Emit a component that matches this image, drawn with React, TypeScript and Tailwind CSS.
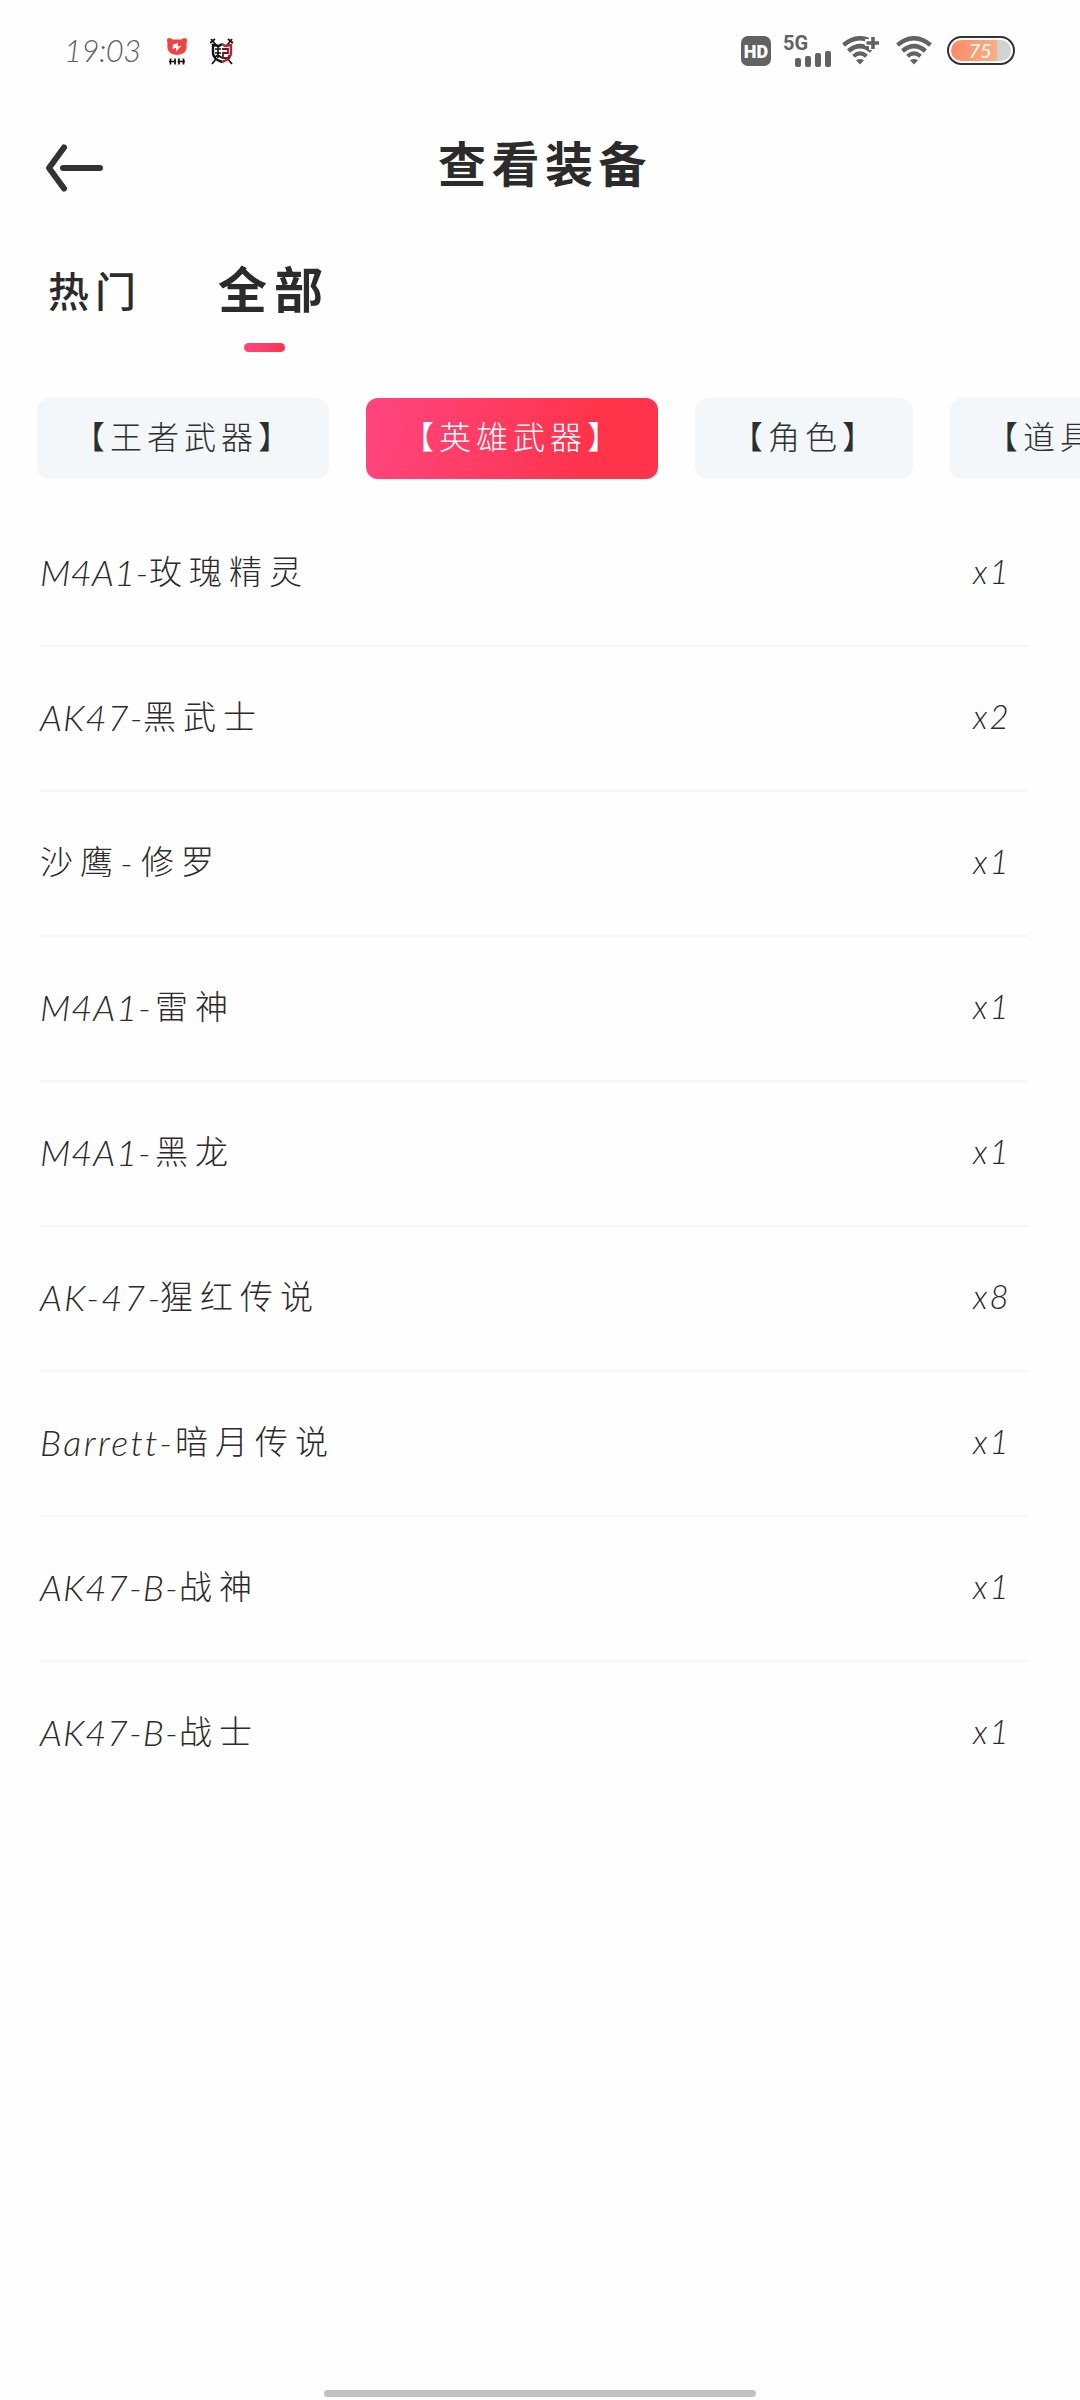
import React from "react";

type Part = { text: string; className: string };
type Item = { parts: Part[]; count: string };

const cjk = "tracking-[7px] text-[33px]";
const latin = "inline-block whitespace-nowrap text-[36px] italic [font-variant-ligatures:none]";

const items: Item[] = [
  { parts: [{ text: "M4A1-", className: `${latin} w-[109px] tracking-[0.4px]` }, { text: "玫瑰精灵", className: cjk }], count: "1" },
  { parts: [{ text: "AK47-", className: `${latin} w-[103px] tracking-[1.2px]` }, { text: "黑武士", className: cjk }], count: "2" },
  {
    parts: [
      { text: "沙鹰", className: cjk },
      { text: "-", className: `${latin} w-[21px]` },
      { text: "修罗", className: cjk },
    ],
    count: "1",
  },
  { parts: [{ text: "M4A1-", className: `${latin} w-[115px] tracking-[1px]` }, { text: "雷神", className: cjk }], count: "1" },
  { parts: [{ text: "M4A1-", className: `${latin} w-[115px] tracking-[1px]` }, { text: "黑龙", className: cjk }], count: "1" },
  { parts: [{ text: "AK-47-", className: `${latin} w-[120px] tracking-[2.2px]` }, { text: "猩红传说", className: cjk }], count: "8" },
  { parts: [{ text: "Barrett-", className: `${latin} w-[135px] tracking-[2.4px]` }, { text: "暗月传说", className: cjk }], count: "1" },
  { parts: [{ text: "AK47-B-", className: `${latin} w-[139px] tracking-[1px]` }, { text: "战神", className: cjk }], count: "1" },
  { parts: [{ text: "AK47-B-", className: `${latin} w-[139px] tracking-[1px]` }, { text: "战士", className: cjk }], count: "1" },
];

function PawIcon() {
  return (
    <svg width="22" height="28" viewBox="0 0 22 28">
      <path d="M1 2 Q1 0 4 0 L7 1.5 H15 L18 0 Q21 0 21 2 L20.5 6 Q22 16 11 17 Q0 16 1.5 6Z" fill="#ee4542" />
      <path d="M7 6.5 L12 5 L11.8 8.5 L15.5 7.5 L10 13.5 L10.2 9.8 L6.5 11Z" fill="#fff" />
      <path d="M4.5 20.5v6M9 20.5v6M3 23.5h7M13 20.5v6M17.500 20.5v6M11.500 23.500h7.500" stroke="#111" strokeWidth="1.7" fill="none" />
    </svg>
  );
}

function ShieldIcon() {
  return (
    <svg width="24" height="28" viewBox="0 0 24 28" fill="none">
      <path d="M1 1 L22 26 M0 5 L5 1" stroke="#181818" strokeWidth="1.8" />
      <path d="M22 1 L2 26 M18 1 L23 5" stroke="#181818" strokeWidth="1.8" />
      <path d="M12 6 L9 8 L3 7 V15 Q3 21 12 24" fill="#fff" stroke="#111" strokeWidth="2.4" />
      <path d="M12 6 L15 8 L21 7 V15 Q21 21 12 24" fill="#fff" stroke="#b3262f" strokeWidth="2.4" />
      <path d="M5 11h6M8 8v12M5 15h6M5 19l3-2 4 3" stroke="#111" strokeWidth="1.6" />
      <path d="M12 11h6v4h-5v5h6v-3" stroke="#6d1a20" strokeWidth="1.8" />
    </svg>
  );
}

function WifiArcs() {
  return (
    <>
      <path d="M1.500 9 Q18 -4.500 34.500 9" strokeWidth="4.400" />
      <path d="M6.500 15 Q18 5.200 29.500 15" strokeWidth="4.400" />
      <path d="M11.500 20.300 Q18 14.500 24.500 20.300" strokeWidth="4" />
      <path d="M14 24.300 Q18 21.500 22 24.300 L18 28.500Z" fill="#626262" stroke="none" />
    </>
  );
}

function StatusBar() {
  return (
    <header className="flex h-[102px] items-start pt-[36px] pl-[64px] text-[#626262]">
      <span className="w-[102px] font-['Lato'] text-[31px] leading-[29px] font-light tracking-[-0.5px] italic">19:03</span>
      <div className="flex w-[575px] gap-[22px] pt-[2px]">
        <PawIcon />
        <ShieldIcon />
      </div>
      <div className="flex h-[30px] w-[30px] items-center justify-center rounded-[7px] bg-[#626262] font-['Roboto'] text-[18px] font-black text-white">
        HD
      </div>
      <div className="ml-[12px] w-[48px]">
        <div className="font-['Roboto'] text-[20px] leading-[15px] font-bold">5G</div>
        <div className="flex h-[16px] items-end gap-[4px] pl-[12px]">
          <i className="h-[9px] w-[6px] rounded-[2px] bg-[#626262]" />
          <i className="h-[11px] w-[6px] rounded-[2px] bg-[#626262]" />
          <i className="h-[14px] w-[6px] rounded-[2px] bg-[#626262]" />
          <i className="h-[16px] w-[6px] rounded-[2px] bg-[#626262]" />
        </div>
      </div>
      <svg className="ml-[11px]" width="38" height="30" viewBox="0 0 38 30" fill="none" stroke="#626262">
        <WifiArcs />
        <path d="M30.500 -1v15M23 6.500h15" stroke="#fefefe" strokeWidth="7" />
        <path d="M31 1v12M24.500 7h12.500" strokeWidth="3.600" />
      </svg>
      <svg className="ml-[16px]" width="36" height="30" viewBox="0 0 36 30" fill="none" stroke="#626262">
        <WifiArcs />
      </svg>
      <div className="ml-[15px] h-[29px] w-[68px] rounded-full border-2 border-[#333] p-[2px]">
        <div className="flex h-[21px] items-center justify-center rounded-full bg-[linear-gradient(90deg,#fc8b68_0%,#fbae82_76%,#d2d2d2_76%)] pr-[2px] font-['Lato'] text-[20px] leading-[21px] font-normal text-white italic">
          75
        </div>
      </div>
    </header>
  );
}

function Chip({ label, active, className }: { label: string; active?: boolean; className: string }) {
  return (
    <button
      className={`flex h-[81px] shrink-0 items-center rounded-[12px] pb-[3px] pl-[36px] text-[32px] tracking-[5px] whitespace-nowrap ${
        active ? "bg-linear-[100deg,#ff4580,#ff344b_75%] text-white" : "bg-[#f3f7f9] text-[#2b302f]"
      } ${className}`}
    >
      {label}
    </button>
  );
}

export default function App() {
  return (
    <main className="flex h-[2400px] w-[1080px] flex-col overflow-hidden bg-[#fefefe] font-['Lato','Noto_Sans_CJK_SC',sans-serif] font-light text-[#2b2b2b]">
      <StatusBar />
      <div className="flex h-[130px] items-center pl-[44px]">
        <svg width="62" height="50" viewBox="0 0 62 50" fill="none" stroke="#333" strokeWidth="6" strokeLinecap="round" strokeLinejoin="round" className="mt-[2px]">
          <path d="M20 4.500 L5 25 L20 45.500 M19 25 H56" />
        </svg>
        <h1 className="ml-[332px] pb-[6px] text-[48px] font-bold tracking-[5.5px]">查看装备</h1>
      </div>
      <nav className="flex h-[166px] items-start pl-[48px]">
        <span className="w-[170px] pt-[31px] text-[41px] leading-[58px] font-medium tracking-[6px]">热门</span>
        <div className="flex w-[112px] flex-col pt-[23px]">
          <span className="text-[49px] leading-[68px] font-bold tracking-[7px]">全部</span>
          <i className="mt-[20px] ml-[26px] h-[9px] w-[41px] rounded-full bg-linear-to-r from-[#ff4580] to-[#ff344b]" />
        </div>
      </nav>
      <div className="flex gap-[37px] pl-[37px]">
        <Chip label="【王者武器】" className="w-[292px]" />
        <Chip label="【英雄武器】" active className="w-[292px]" />
        <Chip label="【角色】" className="w-[218px]" />
        <Chip label="【道具】" className="w-[218px]" />
      </div>
      <ul className="mt-[23px] ml-[40px] w-[988px]">
        {items.map((item, i) => (
          <li key={i} className="flex h-[145px] items-center justify-between border-b-2 border-[#f6f6f6] pb-[4px] last:border-transparent">
            <span className="flex items-center">
              {item.parts.map((p) => (
                <span key={p.text} className={p.className}>
                  {p.text}
                </span>
              ))}
            </span>
            <span className="w-[55px] text-[33px] tracking-[2px] italic">x{item.count}</span>
          </li>
        ))}
      </ul>
      <i className="mx-auto mt-auto mb-[3px] h-[7px] w-[432px] rounded-full bg-[#c1c1c1]" />
    </main>
  );
}
